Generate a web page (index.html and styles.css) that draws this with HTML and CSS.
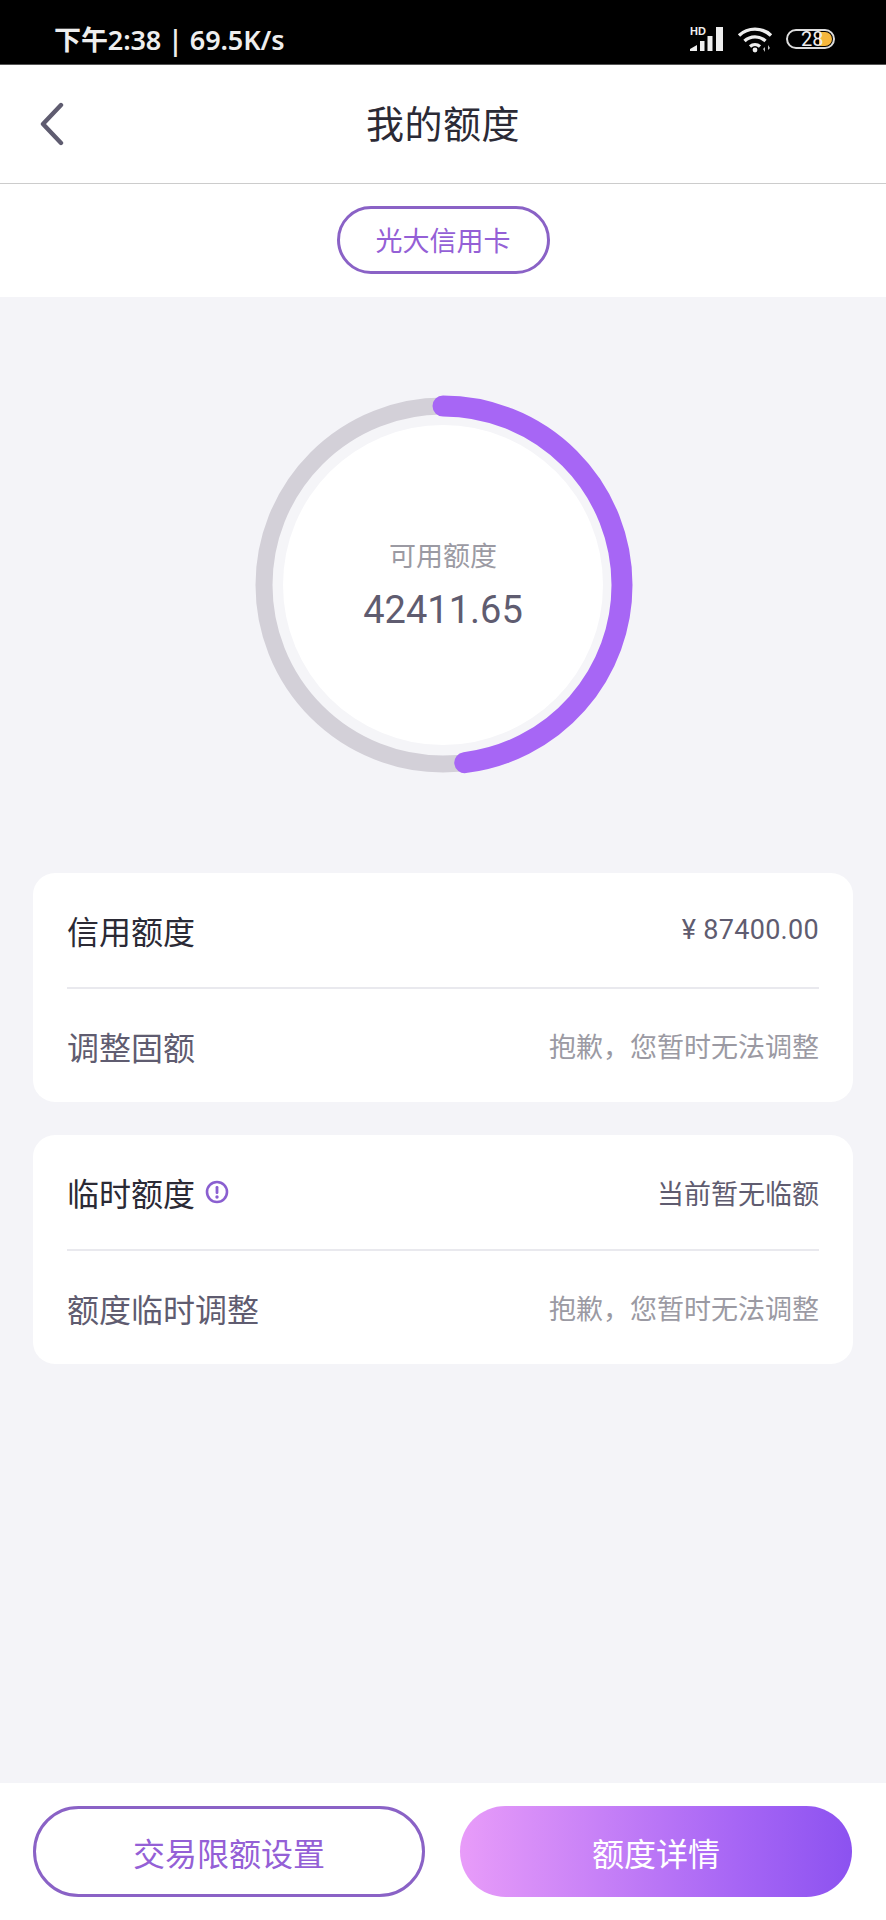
FILE: index.html
```html
<!DOCTYPE html>
<html lang="zh-CN">
<head>
    <meta charset="UTF-8" />
    <meta name="viewport" content="width=device-width, initial-scale=1.0" />
    <title>我的额度</title>
    <link rel="stylesheet" href="styles.css">
</head>
<body>
    <div class="status-bar">
        <span class="status-text">下午2:38 | 69.5K/s</span>
        <div class="status-icons">
            <svg class="icon-signal" width="34" height="26" viewBox="0 0 34 26">
                <text x="0" y="9" class="hd-text">HD</text>
                <path d="M0 25v-2l7-4v6z" fill="#eee"/>
                <rect x="10" y="15" width="4.5" height="10" fill="#eee"/>
                <rect x="17.5" y="10" width="5" height="15" fill="#eee"/>
                <rect x="26" y="1" width="7" height="24" fill="#eee"/>
            </svg>
            <svg class="icon-wifi" width="36" height="27" viewBox="0 0 36 27">
                <path d="M2 9.5C11 1 25 1 34 9.5" fill="none" stroke="#eee" stroke-width="3.4"/>
                <path d="M7.5 15C13.5 9.5 22.5 9.5 28.5 15" fill="none" stroke="#eee" stroke-width="3.4"/>
                <path d="M13 20.5C16 17.8 20 17.8 23 20.5" fill="none" stroke="#eee" stroke-width="3.2"/>
                <circle cx="18" cy="24" r="2.4" fill="#eee"/>
                <path d="M28 26v-5l-2 2zM31 19v5l2-2z" fill="#bbb"/>
            </svg>
            <div class="battery">
                <div class="battery-fill"></div>
                <span class="battery-num">28</span>
            </div>
        </div>
    </div>

    <header class="nav-bar">
        <svg class="back-icon" width="26" height="44" viewBox="0 0 26 44">
            <path d="M22 3L4 22l18 19" fill="none" stroke="#5f5c70" stroke-width="4.4" stroke-linecap="round" stroke-linejoin="round"/>
        </svg>
        <h1 class="nav-title">我的额度</h1>
    </header>

    <div class="tab-bar">
        <div class="card-pill">光大信用卡</div>
    </div>

    <main class="content">
        <div class="ring">
            <svg class="ring-svg" width="400" height="400" viewBox="0 0 400 400">
                <circle cx="200" cy="200" r="171" fill="#f5f5f8"/>
                <circle cx="200" cy="200" r="160" fill="#fff"/>
                <circle cx="200" cy="200" r="179" fill="none" stroke="#d3d0d8" stroke-width="17"/>
                <circle cx="200" cy="200" r="179" fill="none" stroke="#a766f5" stroke-width="21" stroke-linecap="round"
                    pathLength="360" stroke-dasharray="173 360" transform="rotate(-90 200 200)"/>
            </svg>
            <div class="ring-text">
                <div class="ring-label">可用额度</div>
                <div class="ring-value">42411.65</div>
            </div>
        </div>

        <section class="card">
            <div class="row">
                <span class="row-title">信用额度</span>
                <span class="row-value money">¥ 87400.00</span>
            </div>
            <div class="row">
                <span class="row-sub">调整固额</span>
                <span class="row-note">抱歉，您暂时无法调整</span>
            </div>
        </section>

        <section class="card">
            <div class="row">
                <span class="row-title">临时额度
                    <svg class="info-icon" width="24" height="24" viewBox="0 0 24 24">
                        <circle cx="12" cy="12" r="10" fill="none" stroke="#8a5fd0" stroke-width="2.6"/>
                        <rect x="10.6" y="6" width="2.8" height="8" rx="1.2" fill="#8a5fd0"/>
                        <circle cx="12" cy="17" r="1.7" fill="#8a5fd0"/>
                    </svg>
                </span>
                <span class="row-value">当前暂无临额</span>
            </div>
            <div class="row">
                <span class="row-sub">额度临时调整</span>
                <span class="row-note">抱歉，您暂时无法调整</span>
            </div>
        </section>
    </main>

    <footer class="bottom-bar">
        <button class="btn btn-outline">交易限额设置</button>
        <button class="btn btn-fill">额度详情</button>
    </footer>
</body>
</html>
```

FILE: styles.css
```css
* {
    box-sizing: border-box;
}

html, body {
    height: 100%;
}

body {
    font-family: Roboto, "Noto Sans CJK SC", sans-serif;
    margin: 0;
    display: flex;
    flex-direction: column;
    min-height: 1920px;
    background-color: #f4f4f8;
    color: #2b2a35;
}

/* status bar */
.status-bar {
    height: 65px;
    flex-shrink: 0;
    background: #000;
    display: flex;
    align-items: center;
    justify-content: space-between;
    padding: 0 51px 0 54px;
    color: #eee;
    border-bottom: 1px solid #555;
}

.status-text {
    font-family: "Noto Sans", "Noto Sans CJK SC", sans-serif;
    font-size: 27px;
    font-weight: 600;
    letter-spacing: -0.1px;
    margin-top: 13px;
}

.status-icons {
    display: flex;
    align-items: center;
    gap: 13px;
    margin-top: 14px;
}

.hd-text {
    font-family: "Liberation Sans", sans-serif;
    font-size: 11px;
    font-weight: bold;
    fill: #eee;
}

.battery {
    width: 49px;
    height: 20px;
    border: 2px solid #ddd;
    border-radius: 10px;
    display: flex;
    align-items: center;
    justify-content: flex-end;
    padding-right: 1px;
    position: relative;
}

.battery-fill {
    width: 13px;
    height: 14px;
    background: #f6b73c;
    border-radius: 2px 7px 7px 2px;
}

.battery-num {
    position: absolute;
    left: 13px;
    top: -4px;
    font-size: 20px;
    line-height: 24px;
    color: #eee;
}

/* nav */
.nav-bar {
    height: 119px;
    flex-shrink: 0;
    background: #fff;
    border-bottom: 1px solid #ccc;
    display: grid;
    grid-template-columns: 1fr auto 1fr;
    align-items: center;
    padding: 0 39px;
}

.nav-title {
    margin: 2px 0 0;
    font-size: 38px;
    font-weight: 400;
    letter-spacing: 0.5px;
    color: #2b2a35;
    line-height: 1;
}

.tab-bar {
    height: 113px;
    flex-shrink: 0;
    background: #fff;
    display: flex;
    justify-content: center;
    padding-top: 22px;
}

.card-pill {
    width: 213px;
    height: 68px;
    border: 3px solid #8a62c6;
    border-radius: 34px;
    padding-bottom: 2px;
    display: flex;
    align-items: center;
    justify-content: center;
    font-size: 27px;
    color: #9460d6;
}

/* main */
.content {
    flex: 1;
    padding: 88px 33px 0;
    display: flex;
    flex-direction: column;
}

.ring {
    display: grid;
    justify-content: center;
    margin-bottom: 88px;
}

.ring-svg, .ring-text {
    grid-area: 1 / 1;
}

.ring-text {
    display: flex;
    flex-direction: column;
    align-items: center;
    padding-top: 153px;
}

.ring-label {
    font-size: 27px;
    line-height: 38px;
    color: #9b9aa3;
}

.ring-value {
    font-size: 38px;
    line-height: 50px;
    margin-top: 9px;
    color: #5f5c70;
}

.card {
    background: #fff;
    border-radius: 22px;
    padding: 0 34px;
    margin-bottom: 33px;
}

.row {
    height: 114px;
    display: flex;
    align-items: center;
    justify-content: space-between;
}

.row + .row {
    height: 115px;
    border-top: 2px solid #e9e9ee;
}

.row-title {
    font-size: 32px;
    color: #2b2a35;
    display: flex;
    align-items: center;
    gap: 10px;
}

.row-sub {
    font-size: 32px;
    color: #5f5c70;
}

.row-value {
    font-size: 27px;
    color: #5f5c70;
}

.money {
    letter-spacing: 0.3px;
}

.row-note {
    font-size: 27px;
    color: #9b9aa3;
}

/* bottom */
.bottom-bar {
    height: 137px;
    flex-shrink: 0;
    background: #fff;
    display: grid;
    grid-template-columns: 1fr 1fr;
    column-gap: 35px;
    padding: 23px 34px 0 33px;
}

.btn {
    height: 91px;
    padding: 0;
    border-radius: 46px;
    font-family: inherit;
    font-size: 32px;
    cursor: pointer;
}

.btn-outline {
    background: #fff;
    border: 3px solid #8a62c6;
    color: #9460d6;
}

.btn-fill {
    border: none;
    color: #fff;
    background: linear-gradient(90deg, #e89cf9, #a766f5 70%, #8c52f0);
}
```
